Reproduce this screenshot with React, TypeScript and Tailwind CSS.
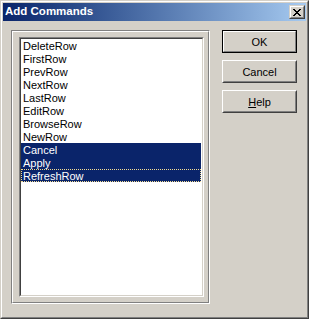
import React from "react";

const items = [
  "DeleteRow",
  "FirstRow",
  "PrevRow",
  "NextRow",
  "LastRow",
  "EditRow",
  "BrowseRow",
  "NewRow",
  "Cancel",
  "Apply",
  "RefreshRow",
];

const selected = ["Cancel", "Apply", "RefreshRow"];

function Button({ children, isDefault }: { children: React.ReactNode; isDefault?: boolean }) {
  if (isDefault) {
    return (
      <div className="h-[23px] w-[75px] border border-black">
        <div className="flex h-full w-full items-center justify-center border border-white border-r-[#808080] border-b-[#808080] pt-[1px] text-[11px] leading-none text-black">
          {children}
        </div>
      </div>
    );
  }
  return (
    <div className="h-[23px] w-[75px] border border-white border-r-[#404040] border-b-[#404040]">
      <div className="flex h-full w-full items-center justify-center border border-[#d4d0c8] border-r-[#808080] border-b-[#808080] pt-[1px] text-[11px] leading-none text-black">
        {children}
      </div>
    </div>
  );
}

export default function App() {
  return (
    <div className="h-[319px] w-[309px] border border-[#d4d0c8] border-r-[#404040] border-b-[#404040] bg-[#d4d0c8] font-['Liberation_Sans',Arial,sans-serif]">
      <div className="flex h-full flex-col border border-white border-r-[#808080] border-b-[#808080] p-[1px]">
        {/* title bar */}
        <div className="flex h-[18px] items-center justify-between bg-gradient-to-r from-[#0a246a] to-[#a6caf0] pl-[2px] pr-[1px]">
          <span className="text-[11.5px] font-bold leading-none text-white">Add Commands</span>
          <div className="h-[14px] w-[16px] border border-[#d4d0c8] border-r-[#404040] border-b-[#404040]">
            <div className="flex h-full w-full items-center justify-center border border-white border-r-[#808080] border-b-[#808080] bg-[#d4d0c8]">
              <svg width="8" height="7" viewBox="0 0 8 7" shapeRendering="crispEdges">
                <path
                  d="M0 0h2v1h-2zM6 0h2v1h-2zM1 1h2v1h-2zM5 1h2v1h-2zM2 2h4v1h-4zM3 3h2v1h-2zM2 4h4v1h-4zM1 5h2v1h-2zM5 5h2v1h-2zM0 6h2v1h-2zM6 6h2v1h-2z"
                  fill="#000"
                />
              </svg>
            </div>
          </div>
        </div>

        {/* client */}
        <div className="flex flex-1 pl-[8px] pt-[9px]">
          {/* etched frame */}
          <div className="h-[274px] w-[199px] border border-[#808080] border-r-white border-b-white">
            <div className="h-full w-full border border-white border-r-[#808080] border-b-[#808080] pl-[6px] pt-[5px]">
              {/* listbox */}
              <div className="h-[260px] w-[185px] border border-[#808080] border-r-white border-b-white">
                <div className="h-full w-full border border-[#404040] border-r-[#d4d0c8] border-b-[#d4d0c8] bg-white">
                  {items.map((item) => {
                    const sel = selected.includes(item);
                    const focus = item === "RefreshRow";
                    return (
                      <div
                        key={item}
                        className={`h-[13px] w-[180px] text-[11px] leading-[11px] ${
                          sel ? "bg-[#0a246a] text-white" : "text-black"
                        } ${
                          focus
                            ? "border border-dotted border-[#f2dc94] pl-[1px] pt-[1px]"
                            : "pl-[2px] pt-[2px]"
                        }`}
                      >
                        {item}
                      </div>
                    );
                  })}
                </div>
              </div>
            </div>
          </div>

          {/* buttons */}
          <div className="ml-[12px] flex flex-col gap-[7px]">
            <Button isDefault>OK</Button>
            <Button>Cancel</Button>
            <Button>
              <span>
                <span className="underline underline-offset-1">H</span>elp
              </span>
            </Button>
          </div>
        </div>
      </div>
    </div>
  );
}
